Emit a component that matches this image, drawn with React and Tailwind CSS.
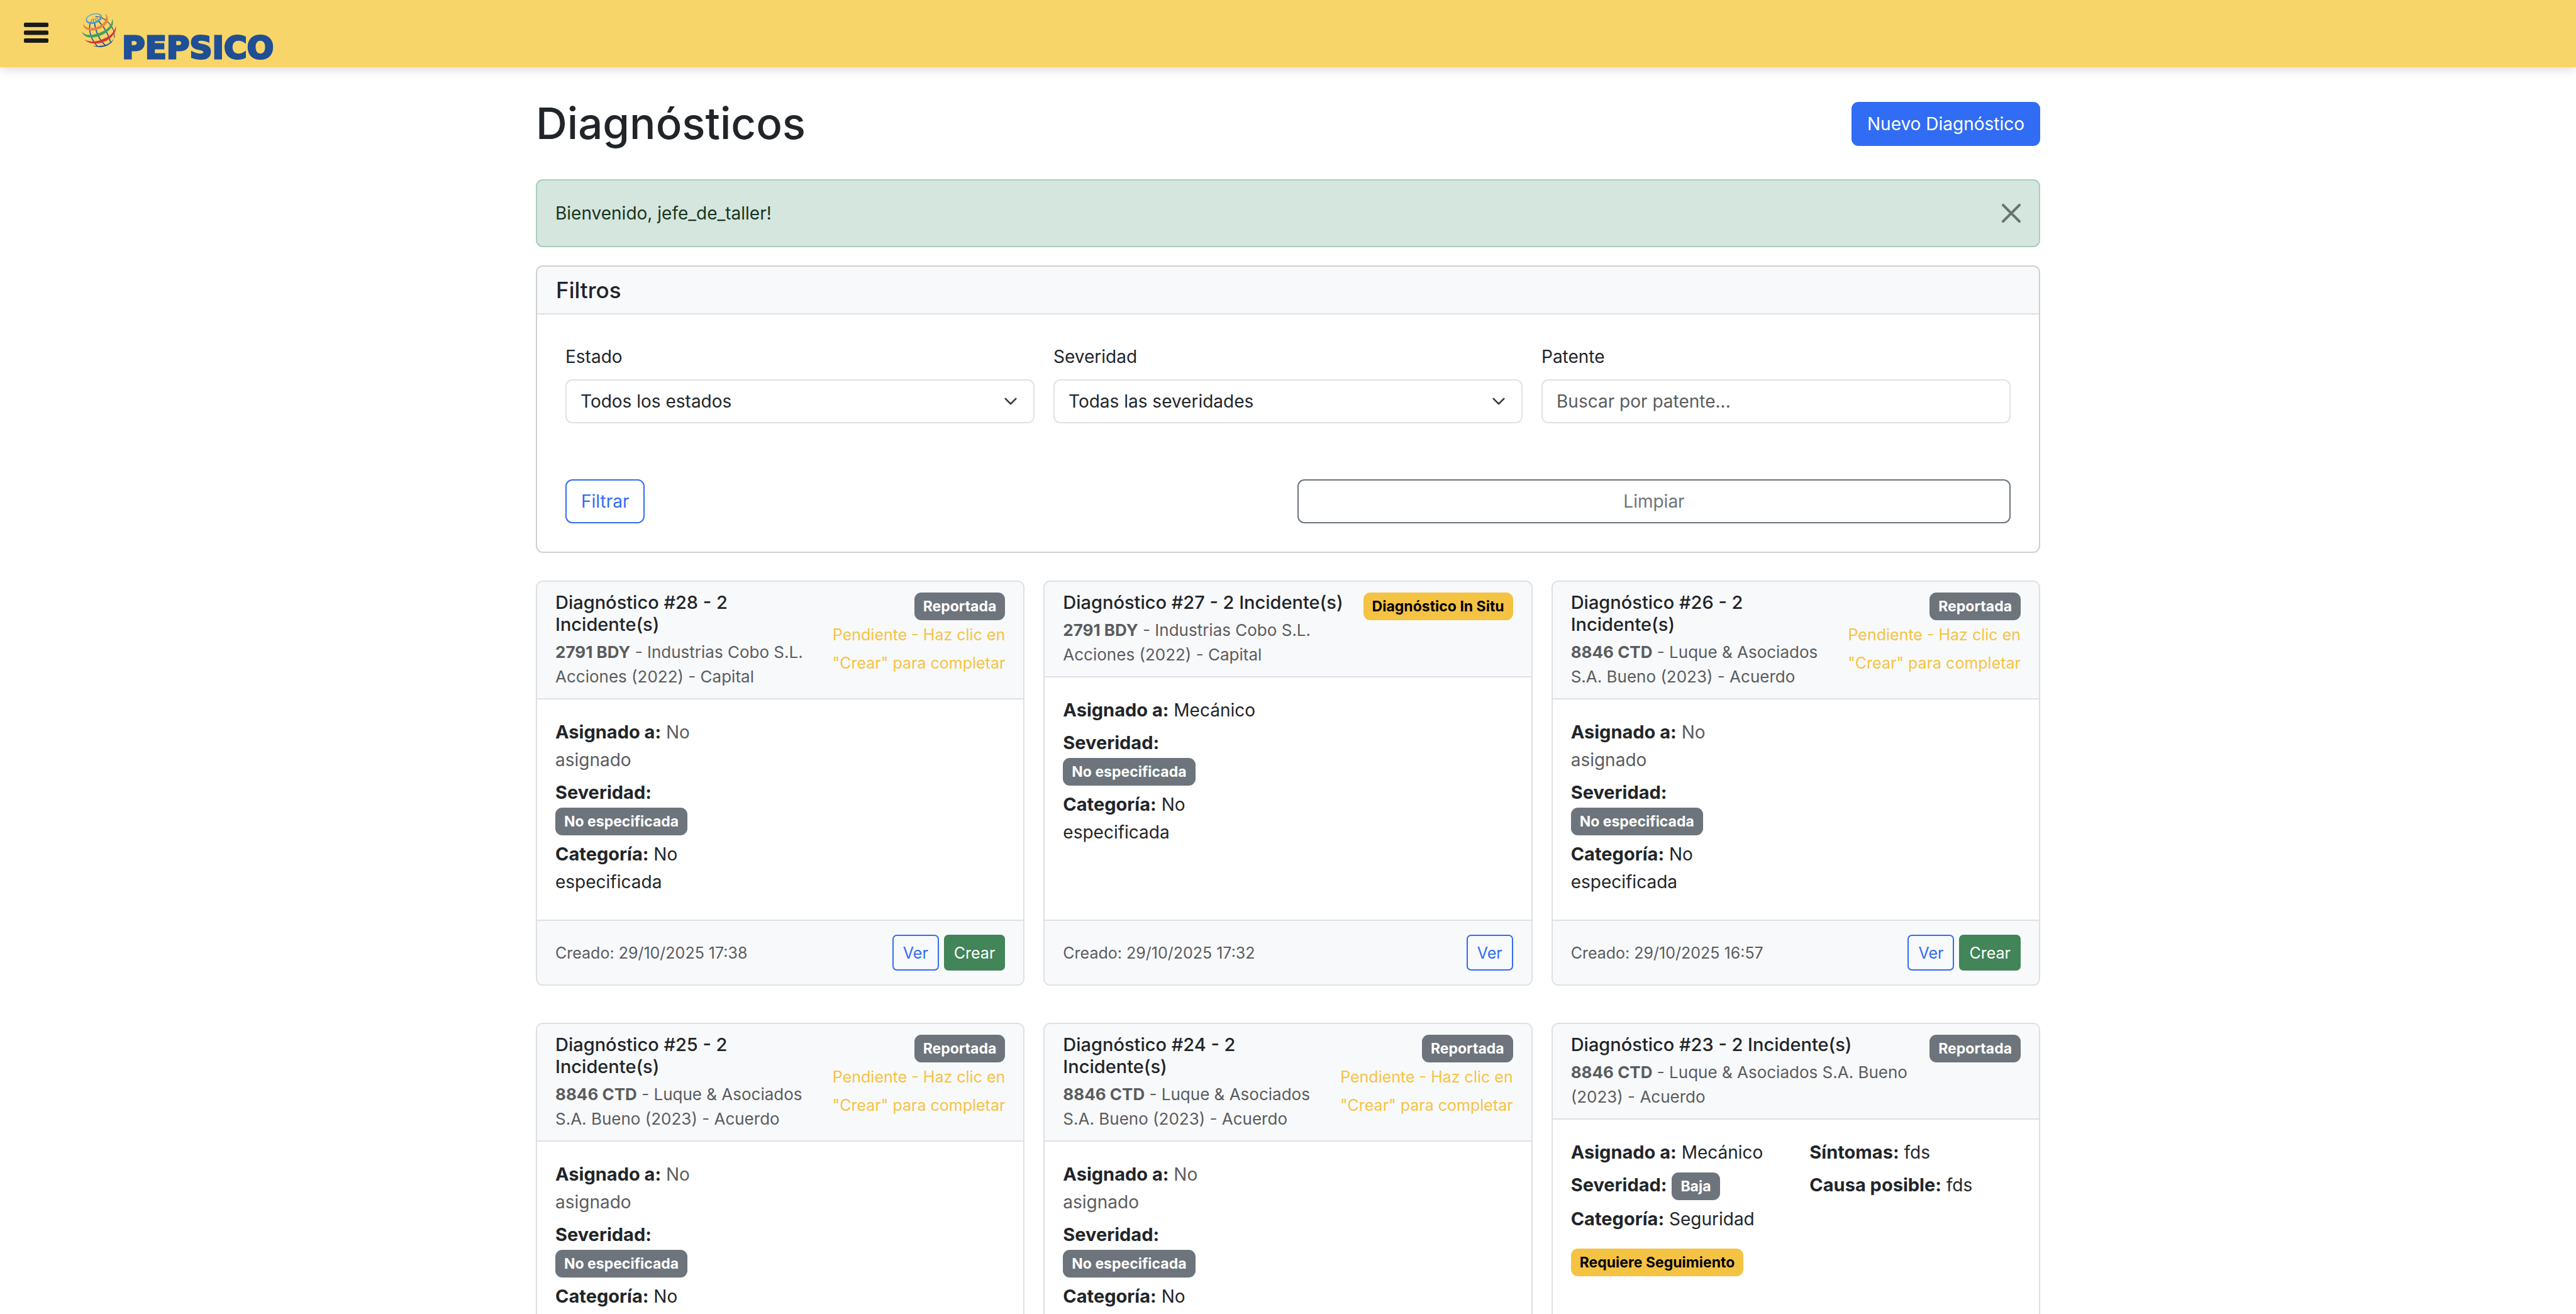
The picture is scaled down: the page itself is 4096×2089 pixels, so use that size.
const CARDS = [
  {
    id: 28,
    title: ['Diagnóstico #28 - 2', 'Incidente(s)'],
    plate: '2791 BDY',
    vehicle: ['Industrias Cobo S.L.', 'Acciones (2022) - Capital'],
    status: 'Reportada',
    pending: true,
    created: '29/10/2025 17:38',
  },
  {
    id: 27,
    title: ['Diagnóstico #27 - 2 Incidente(s)'],
    plate: '2791 BDY',
    vehicle: ['Industrias Cobo S.L.', 'Acciones (2022) - Capital'],
    status: 'Diagnóstico In Situ',
    warning: true,
    mechanic: 'Mecánico',
    created: '29/10/2025 17:32',
  },
  {
    id: 26,
    title: ['Diagnóstico #26 - 2', 'Incidente(s)'],
    plate: '8846 CTD',
    vehicle: ['Luque & Asociados', 'S.A. Bueno (2023) - Acuerdo'],
    status: 'Reportada',
    pending: true,
    created: '29/10/2025 16:57',
  },
  {
    id: 25,
    title: ['Diagnóstico #25 - 2', 'Incidente(s)'],
    plate: '8846 CTD',
    vehicle: ['Luque & Asociados', 'S.A. Bueno (2023) - Acuerdo'],
    status: 'Reportada',
    pending: true,
  },
  {
    id: 24,
    title: ['Diagnóstico #24 - 2', 'Incidente(s)'],
    plate: '8846 CTD',
    vehicle: ['Luque & Asociados', 'S.A. Bueno (2023) - Acuerdo'],
    status: 'Reportada',
    pending: true,
  },
  {
    id: 23,
    title: ['Diagnóstico #23 - 2 Incidente(s)'],
    plate: '8846 CTD',
    vehicle: ['Luque & Asociados S.A. Bueno', '(2023) - Acuerdo'],
    status: 'Reportada',
    mechanic: 'Mecánico',
    severity: 'Baja',
    category: 'Seguridad',
    symptoms: 'fds',
    cause: 'fds',
    followUp: true,
  },
];

function Globe() {
  return (
    <svg viewBox="0 0 240 228" className="h-[70px] w-[74px]" aria-hidden="true">
      <g fill="none" stroke="#1f4f96" strokeLinecap="round">
        <path d="M76 76C66 112 78 162 114 198" strokeWidth="5" />
        <path d="M98 74C104 122 124 166 154 192" strokeWidth="5.5" />
        <path d="M122 70C146 96 170 132 182 178" strokeWidth="5.5" />
        <path d="M104 44C150 42 206 96 201 152" strokeWidth="4" />
        <path d="M94 54L91 76M86 57L78 76M102 54L110 74M108 50L124 68" strokeWidth="2.5" />
      </g>
      <path d="M90 195C134 212 182 196 199 158C176 190 138 200 90 195Z" fill="#1f4f96" />
      <path
        fillRule="evenodd"
        fill="#3f9bdc"
        d="M54 64C50 42 84 26 112 27C142 30 144 54 122 68C96 86 58 86 54 64ZM59 60C62 76 94 78 116 62C134 48 134 34 110 31C86 30 56 44 59 60Z"
      />
      <path d="M40 78C34 116 86 126 130 104C170 86 178 50 154 28C164 52 154 76 126 91C88 110 48 106 40 78Z" fill="#e78345" />
      <path d="M32 120C42 160 100 160 148 133C188 110 202 84 190 54C190 82 174 104 142 120C96 144 46 146 32 120Z" fill="#449e5c" />
      <path d="M47 162C72 192 132 188 170 162C200 140 212 118 209 91C203 118 188 136 162 151C120 174 78 180 47 162Z" fill="#dd342f" />
    </svg>
  );
}

function Navbar() {
  return (
    <header className="flex h-[107px] items-start bg-[#f8d568] shadow-[0_4px_14px_rgba(0,0,0,0.14)]">
      <button type="button" aria-label="Abrir menú" className="ml-[38px] mt-[36px]">
        <svg viewBox="0 0 39 32" className="h-[32px] w-[39px]" fill="#1b1b1b" aria-hidden="true">
          <rect width="39" height="7" rx="2" />
          <rect y="12.5" width="39" height="7" rx="2" />
          <rect y="25" width="39" height="7" rx="2" />
        </svg>
      </button>
      <a href="#" className="ml-[43px] flex pt-[13px]">
        <Globe />
        <span className="mt-[38px] font-['DejaVu_Sans',sans-serif] text-[50px] font-bold leading-[50px] text-[#1f4f96] [-webkit-text-stroke:3px_#1f4f96]">
          PEPSICO
        </span>
      </a>
    </header>
  );
}

function Chevron() {
  return (
    <svg
      viewBox="0 0 16 16"
      className="pointer-events-none absolute right-[27px] top-[24px] h-[22px] w-[22px]"
      fill="none"
      stroke="#343a40"
      strokeWidth="2"
      strokeLinecap="round"
      strokeLinejoin="round"
      aria-hidden="true"
    >
      <path d="m2 5 6 6 6-6" />
    </svg>
  );
}

const FIELD =
  'block h-[70px] w-full appearance-none rounded-[11px] border-2 border-[#dfe1e6] bg-white pl-[22px] pr-[60px] text-[28px] text-[#212529] placeholder:text-[#5a5c5e] placeholder:opacity-100';

function SelectField({ id, label, option }) {
  return (
    <div>
      <label htmlFor={id} className="mb-[14px] block w-fit">{label}</label>
      <div className="relative">
        <select id={id} className={FIELD}>
          <option>{option}</option>
        </select>
        <Chevron />
      </div>
    </div>
  );
}

function Filters() {
  return (
    <section className="mb-[44px] rounded-[11px] border-2 border-[#cfd0d2] bg-white">
      <h2 className="rounded-t-[9px] border-b-2 border-[#dee0e4] bg-[#f8f9fb] px-[30px] py-[15px] text-[35px] font-medium leading-[44px]">
        Filtros
      </h2>
      <form className="px-[45px] py-[45px]" onSubmit={(e) => e.preventDefault()}>
        <div className="mb-[89px] grid grid-cols-3 gap-[30px]">
          <SelectField id="estado" label="Estado" option="Todos los estados" />
          <SelectField id="severidad" label="Severidad" option="Todas las severidades" />
          <div>
            <label htmlFor="patente" className="mb-[14px] block w-fit">Patente</label>
            <input id="patente" type="text" placeholder="Buscar por patente..." className={FIELD} />
          </div>
        </div>
        <div className="grid grid-cols-2 gap-[30px]">
          <button
            type="submit"
            className="h-[70px] justify-self-start rounded-[11px] border-2 border-[#316cf4] px-[23px] text-[#316cf4]"
          >
            Filtrar
          </button>
          <button type="reset" className="h-[70px] rounded-[11px] border-2 border-[#6d747b] text-[#6d747b]">
            Limpiar
          </button>
        </div>
      </form>
    </section>
  );
}

function Badge({ warning, children }) {
  const tone = warning ? 'bg-[#f5c344] text-black' : 'bg-[#6d747b] text-white';
  return (
    <span
      className={`inline-block whitespace-nowrap rounded-[11px] px-[14px] py-[11px] text-[23px] font-bold leading-[22px] ${tone}`}
    >
      {children}
    </span>
  );
}

function Field({ label, children }) {
  return (
    <p className="mb-[8px]">
      <strong className="text-[29px] font-bold">{label}:</strong> {children}
    </p>
  );
}

function Card({ card }) {
  return (
    <article className="flex flex-col rounded-[11px] border-2 border-[#dee0e5] bg-white">
      <div className="flex items-start justify-between rounded-t-[9px] border-b-2 border-[#dee0e5] bg-[#f8f9fb] px-[29px] py-[15px]">
        <div className="whitespace-nowrap">
          <h3 className="mb-[7px] text-[29px] font-medium leading-[35px]">
            {card.title.map((line) => (
              <span key={line} className="block">{line}</span>
            ))}
          </h3>
          <p className="text-[26px] leading-[39px] text-[#5a5c5e]">
            <strong className="font-bold">{card.plate}</strong> - {card.vehicle[0]}
            <br />
            {card.vehicle[1]}
          </p>
        </div>
        <div className="text-right">
          <Badge warning={card.warning}>{card.status}</Badge>
          {card.pending && (
            <p className="whitespace-nowrap text-[#f5c344]">
              <small className="text-[25px]">
                Pendiente - Haz clic en
                <br />
                "Crear" para completar
              </small>
            </p>
          )}
        </div>
      </div>

      <div className="grow px-[29px] py-[30px]">
        <div className="grid grid-cols-2 gap-[44px]">
          <div>
            <Field label="Asignado a">
              {card.mechanic ?? <span className="text-[#5a5c5e]">No asignado</span>}
            </Field>
            <Field label="Severidad">
              <Badge>{card.severity ?? 'No especificada'}</Badge>
            </Field>
            <Field label="Categoría">{card.category ?? 'No especificada'}</Field>
          </div>
          {card.symptoms && (
            <div>
              <Field label="Síntomas">{card.symptoms}</Field>
              <Field label="Causa posible">{card.cause}</Field>
            </div>
          )}
        </div>
        {card.followUp && (
          <div className="mt-[15px]">
            <Badge warning>Requiere Seguimiento</Badge>
          </div>
        )}
      </div>

      {card.created && (
        <div className="flex items-center justify-between rounded-b-[9px] border-t-2 border-[#dee0e5] bg-[#f8f9fb] px-[29px] py-[22px] text-[25px]">
          <span className="text-[#5a5c5e]">Creado: {card.created}</span>
          <div className="flex gap-[8px]">
            <a
              href={`#ver-${card.id}`}
              className="flex h-[57px] items-center rounded-[7px] border-2 border-[#316cf4] px-[15px] text-[#316cf4]"
            >
              Ver
            </a>
            {card.pending && (
              <a
                href={`#crear-${card.id}`}
                className="flex h-[57px] items-center rounded-[7px] bg-[#418558] px-[16px] text-white"
              >
                Crear
              </a>
            )}
          </div>
        </div>
      )}
    </article>
  );
}

export default function App() {
  return (
    <div className="h-screen overflow-hidden bg-white font-['Inter',sans-serif] text-[28px] leading-[44px] text-[#212529]">
      <Navbar />
      <main className="mx-auto w-full max-w-[2392px] pt-[45px]">
        <div className="mb-[44px] flex items-center justify-between">
          <h1 className="text-[69px] font-medium leading-[89px]">Diagnósticos</h1>
          <a href="#nuevo" className="flex h-[70px] items-center rounded-[11px] bg-[#316cf4] px-[25px] text-white">
            Nuevo Diagnóstico
          </a>
        </div>

        <div
          role="alert"
          className="mb-[29px] flex items-center justify-between rounded-[11px] border-2 border-[#a9cfbc] bg-[#d5e6de] px-[29px] py-[30px] text-[#17351f]"
        >
          <p>Bienvenido, jefe_de_taller!</p>
          <button type="button" aria-label="Cerrar">
            <svg viewBox="0 0 30 30" className="h-[30px] w-[30px]" stroke="#6b736f" strokeWidth="4" strokeLinecap="round" aria-hidden="true">
              <path d="M2 2 28 28M28 2 2 28" />
            </svg>
          </button>
        </div>

        <Filters />

        <div className="grid grid-cols-3 gap-x-[30px] gap-y-[59px]">
          {CARDS.map((card) => (
            <Card key={card.id} card={card} />
          ))}
        </div>
      </main>
    </div>
  );
}
